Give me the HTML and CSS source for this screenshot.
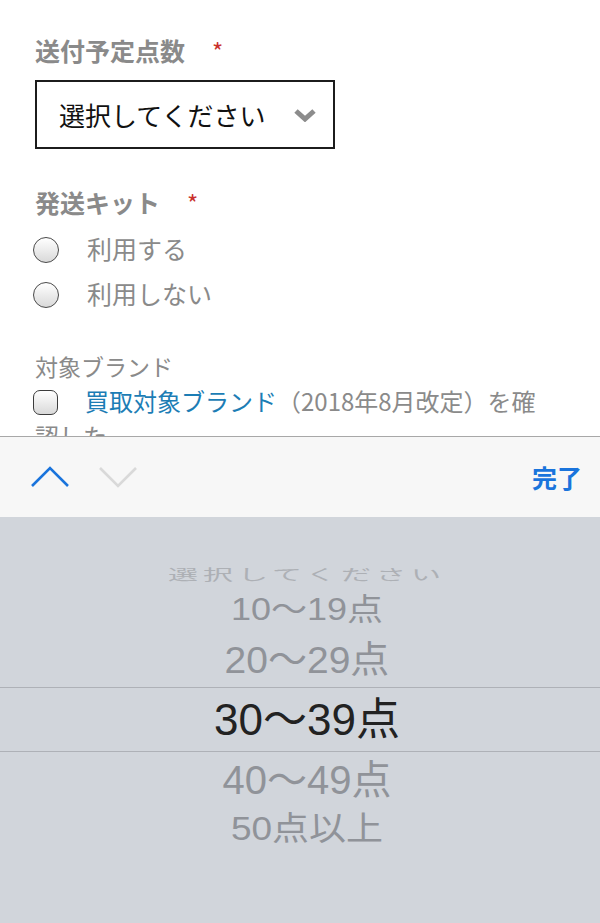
FILE: index.html
```html
<!DOCTYPE html>
<html>

<head>
  <meta charset="utf8">
  <title>送付予定点数</title>
  <link rel="stylesheet" href="styles.css">
</head>

<body>
  <div class="form">
    <div class="field">
      <div class="field-label">送付予定点数<span class="required">*</span></div>
      <div class="select-box">
        <span>選択してください</span>
        <svg class="select-arrow" width="24" height="14" viewBox="0 0 24 14">
          <polyline points="3,3 12,11 21,3" fill="none" stroke="#8c8c8c" stroke-width="5" stroke-linejoin="miter" />
        </svg>
      </div>
    </div>

    <div class="field kit">
      <div class="field-label">発送キット<span class="required">*</span></div>
      <label class="radio-row"><input type="radio" name="kit" class="radio"><span>利用する</span></label>
      <label class="radio-row"><input type="radio" name="kit" class="radio"><span>利用しない</span></label>
    </div>

    <div class="field brand">
      <div class="sub-label">対象ブランド</div>
      <p class="check-line"><input type="checkbox" class="checkbox"><a href="#">買取対象ブランド</a>（2018年8月改定）を確認した</p>
    </div>
  </div>

  <!-- barra de la rueda -->
  <div class="toolbar">
    <svg class="nav-arrow" width="40" height="24" viewBox="0 0 40 24">
      <polyline points="2,21 20,3 38,21" fill="none" stroke="#1a74dc" stroke-width="2.6" />
    </svg>
    <svg class="nav-arrow" width="40" height="24" viewBox="0 0 40 24">
      <polyline points="2,3 20,21 38,3" fill="none" stroke="#d9d9d9" stroke-width="2.6" />
    </svg>
    <span class="done">完了</span>
  </div>

  <div class="picker">
    <div class="item item-0">選択してください</div>
    <div class="item item-1">10〜19点</div>
    <div class="item item-2">20〜29点</div>
    <div class="item item-selected">30〜39点</div>
    <div class="item item-4">40〜49点</div>
    <div class="item item-5">50点以上</div>
  </div>
</body>

</html>
```

FILE: styles.css
```css
/* General */
body {
  margin: 0;
  font-family: "Noto Sans CJK JP", sans-serif;
  background: #fff;
}

/* Formulario (se corta bajo la barra) */
.form {
  height: 436px;
  overflow: hidden;
  box-sizing: border-box;
  padding: 35px 35px 0;
}

.field-label {
  font-size: 25px;
  line-height: 30px;
  font-weight: bold;
  color: #8a8a8a;
}

.required {
  color: #c9302c;
  font-size: 24px;
  font-weight: normal;
  margin-left: 27px;
}

.select-box {
  margin-top: 14px;
  width: 300px;
  height: 69px;
  box-sizing: border-box;
  border: 2px solid #1c1c1c;
  display: flex;
  align-items: center;
  justify-content: space-between;
  padding: 0 16px 0 22px;
  font-size: 26px;
  color: #111;
}

.kit {
  margin-top: 38px;
}

.radio-row {
  display: flex;
  align-items: center;
  height: 45px;
  font-size: 25px;
  color: #8a8a8a;
}

.radio-row span {
  margin-top: -3px;
}

.kit .field-label {
  margin-bottom: 9px;
}

.radio {
  appearance: none;
  -webkit-appearance: none;
  width: 26px;
  height: 26px;
  margin: 0 28px 0 -2px;
  border: 1.5px solid #4a4a4a;
  border-radius: 50%;
  box-sizing: border-box;
  background: linear-gradient(#ffffff, #d9d9d9);
}

.brand {
  margin-top: 35px;
}

.sub-label {
  font-size: 23px;
  line-height: 28px;
  color: #8a8a8a;
}

.check-line {
  margin: 3px 0 0;
  padding-right: 15px;
  font-size: 24px;
  line-height: 35px;
  color: #8a8a8a;
}

.check-line a {
  color: #1c7db5;
  text-decoration: none;
}

.checkbox {
  appearance: none;
  -webkit-appearance: none;
  display: inline-block;
  vertical-align: -4px;
  width: 25px;
  height: 25px;
  margin: 0 27px 0 -2px;
  border: 1.5px solid #3c3c3c;
  border-radius: 7px;
  box-sizing: border-box;
  background: linear-gradient(#ffffff, #d9d9d9);
}

/* Barra */
.toolbar {
  height: 80px;
  border-top: 1px solid #a8a8a8;
  background: #f7f7f7;
  display: flex;
  align-items: center;
  gap: 28px;
  padding: 0 18px 0 30px;
}

.done {
  margin-left: auto;
  font-size: 25px;
  font-weight: bold;
  color: #1a74dc;
}

/* Rueda */
.picker {
  height: 406px;
  box-sizing: border-box;
  padding-top: 41px;
  background: #d1d5db;
  font-family: "Liberation Sans", "Noto Sans CJK JP", sans-serif;
  color: #909399;
  text-align: center;
}

.item {
  padding-left: 14px;
  white-space: nowrap;
}

.item-0 {
  height: 34px;
  line-height: 34px;
  font-size: 30px;
  letter-spacing: 5px;
  color: #adb0b5;
  transform: scaleY(0.5);
}

.item-1 {
  height: 36px;
  line-height: 36px;
  font-size: 36px;
  transform: scaleY(0.85);
}

.item-2 {
  margin-top: 7px;
  height: 52px;
  line-height: 52px;
  font-size: 39px;
  transform: scaleY(0.95);
}

.item-selected {
  height: 63px;
  line-height: 63px;
  border-top: 1px solid #aeb1b7;
  border-bottom: 1px solid #aeb1b7;
  font-size: 44px;
  color: #222;
}

.item-4 {
  height: 56px;
  line-height: 56px;
  font-size: 40px;
}

.item-5 {
  height: 42px;
  line-height: 42px;
  font-size: 37px;
  transform: scaleY(0.9);
}
```
